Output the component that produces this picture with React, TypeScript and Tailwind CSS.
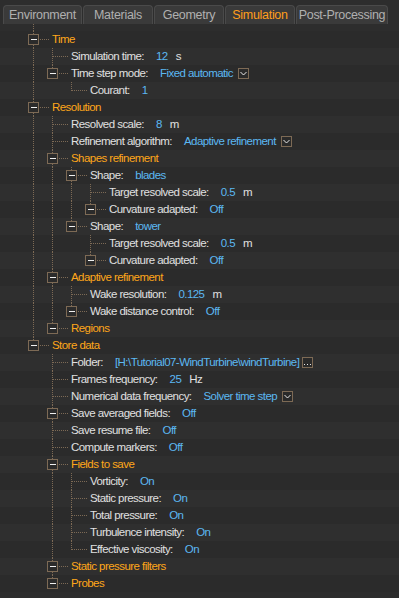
import React from 'react';

type Node = {
  label: string;
  group?: boolean;
  value?: string;
  unit?: string;
  extra?: 'dropdown' | 'browse';
  box?: boolean;
  children?: Node[];
};

const tree: Node[] = [
  {
    label: 'Time',
    group: true,
    children: [
      { label: 'Simulation time:', value: '12', unit: 's' },
      {
        label: 'Time step mode:',
        value: 'Fixed automatic',
        extra: 'dropdown',
        box: true,
        children: [{ label: 'Courant:', value: '1' }],
      },
    ],
  },
  {
    label: 'Resolution',
    group: true,
    children: [
      { label: 'Resolved scale:', value: '8', unit: 'm' },
      { label: 'Refinement algorithm:', value: 'Adaptive refinement', extra: 'dropdown' },
      {
        label: 'Shapes refinement',
        group: true,
        children: [
          {
            label: 'Shape:',
            value: 'blades',
            box: true,
            children: [
              { label: 'Target resolved scale:', value: '0.5', unit: 'm' },
              { label: 'Curvature adapted:', value: 'Off', box: true },
            ],
          },
          {
            label: 'Shape:',
            value: 'tower',
            box: true,
            children: [
              { label: 'Target resolved scale:', value: '0.5', unit: 'm' },
              { label: 'Curvature adapted:', value: 'Off', box: true },
            ],
          },
        ],
      },
      {
        label: 'Adaptive refinement',
        group: true,
        children: [
          { label: 'Wake resolution:', value: '0.125', unit: 'm' },
          { label: 'Wake distance control:', value: 'Off', box: true },
        ],
      },
      { label: 'Regions', group: true },
    ],
  },
  {
    label: 'Store data',
    group: true,
    children: [
      { label: 'Folder:', value: '[H:\\Tutorial07-WindTurbine\\windTurbine]', extra: 'browse' },
      { label: 'Frames frequency:', value: '25', unit: 'Hz' },
      { label: 'Numerical data frequency:', value: 'Solver time step', extra: 'dropdown' },
      { label: 'Save averaged fields:', value: 'Off', box: true },
      { label: 'Save resume file:', value: 'Off' },
      { label: 'Compute markers:', value: 'Off' },
      {
        label: 'Fields to save',
        group: true,
        children: [
          { label: 'Vorticity:', value: 'On' },
          { label: 'Static pressure:', value: 'On' },
          { label: 'Total pressure:', value: 'On' },
          { label: 'Turbulence intensity:', value: 'On' },
          { label: 'Effective viscosity:', value: 'On' },
        ],
      },
      { label: 'Static pressure filters', group: true },
      { label: 'Probes', group: true },
    ],
  },
];

type Row = { node: Node; guides: boolean[]; last: boolean };

function flatten(nodes: Node[], guides: boolean[], out: Row[]) {
  nodes.forEach((n, i) => {
    const last = i === nodes.length - 1;
    out.push({ node: n, guides, last });
    if (n.children) flatten(n.children, [...guides, !last], out);
  });
  return out;
}

const rows = flatten(tree, [], []);

const tabs = [
  { name: 'Environment', w: 'w-[79px]' },
  { name: 'Materials', w: 'w-[70px]' },
  { name: 'Geometry', w: 'w-[70px]' },
  { name: 'Simulation', w: 'w-[70px]', active: true },
  { name: 'Post-Processing', w: 'w-[92px]' },
];

function Dropdown() {
  return (
    <span className="ml-[5px] flex h-[11px] w-[11px] items-center justify-center border border-[#7d6a55] bg-[#2a2a2a]">
      <svg width="9" height="9" viewBox="0 0 9 9">
        <polyline points="1.5,3 4.5,6 7.5,3" fill="none" stroke="#e8e8e8" strokeWidth="1" />
      </svg>
    </span>
  );
}

function Browse() {
  return (
    <span className="ml-[3px] flex h-[11px] w-[11px] items-end justify-center border border-[#7d6a55] bg-[#2a2a2a] pb-[1px]">
      <svg width="7" height="2" viewBox="0 0 7 2">
        <rect x="0" y="0" width="1" height="1" fill="#e8e8e8" />
        <rect x="3" y="0" width="1" height="1" fill="#e8e8e8" />
        <rect x="6" y="0" width="1" height="1" fill="#e8e8e8" />
      </svg>
    </span>
  );
}

function TreeRow({ row, index }: { row: Row; index: number }) {
  const { node, guides, last } = row;
  return (
    <div className={`flex h-[17px] items-center ${index % 2 === 0 ? 'bg-[#2b2b2b]' : 'bg-[#2f2f2f]'}`}>
      <div className="h-full w-6 shrink-0" />
      {guides.map((g, i) => (
        <div key={i} className="relative h-full w-[19px] shrink-0">
          {g && <div className="absolute left-[9px] top-0 h-full border-l border-dotted border-[#7d6a55]" />}
        </div>
      ))}
      <div className="relative h-full w-[28px] shrink-0">
        <div
          className={`absolute left-[9px] top-0 border-l border-dotted border-[#7d6a55] ${last ? 'h-[9px]' : 'h-full'}`}
        />
        <div className="absolute left-[10px] top-[8px] w-[15px] border-t border-dotted border-[#7d6a55]" />
        {(node.group || node.box) && (
          <div className="absolute left-[4px] top-[3px] flex h-[11px] w-[11px] items-center justify-center border border-[#7d6a55] bg-[#2b2b2b]">
            <div className="h-px w-[6px] bg-[#f0f0f0]" />
          </div>
        )}
      </div>
      {node.group ? (
        <span className="whitespace-nowrap text-[#ffa71a]">{node.label}</span>
      ) : (
        <div className="flex items-center whitespace-nowrap">
          <span className="text-[#e0e0e0]">{node.label}</span>
          <span className="ml-3 text-[#5cb8f2]">{node.value}</span>
          {node.unit && <span className="ml-2 text-[#e0e0e0]">{node.unit}</span>}
          {node.extra === 'dropdown' && <Dropdown />}
          {node.extra === 'browse' && <Browse />}
        </div>
      )}
    </div>
  );
}

export default function App() {
  return (
    <div
      className="h-[598px] w-[399px] overflow-hidden bg-[#2d2d2d] text-[11.5px] leading-[17px] tracking-[-0.55px]"
      style={{ fontFamily: '"Liberation Sans", Arial, sans-serif' }}
    >
      <div className="flex h-6 items-end gap-px bg-[#2d2d2d] pl-[3px]">
        {tabs.map((t) => (
          <div
            key={t.name}
            className={`flex h-[19px] items-center justify-center rounded-t-[4px] border-x border-t border-[#4a4a4a] bg-[#3a3a3a] text-[12.5px] tracking-[-0.3px] ${t.w} ${
              t.active ? 'text-[#ff9e1b]' : 'text-[#b0b0b0]'
            }`}
          >
            {t.name}
          </div>
        ))}
      </div>
      <div className="flex h-[7px]">
        <div className="w-6 shrink-0" />
        <div className="relative h-full w-[19px]">
          <div className="absolute left-[9px] top-0 h-full border-l border-dotted border-[#7d6a55]" />
        </div>
      </div>
      {rows.map((r, i) => (
        <TreeRow key={i} row={r} index={i} />
      ))}
    </div>
  );
}
